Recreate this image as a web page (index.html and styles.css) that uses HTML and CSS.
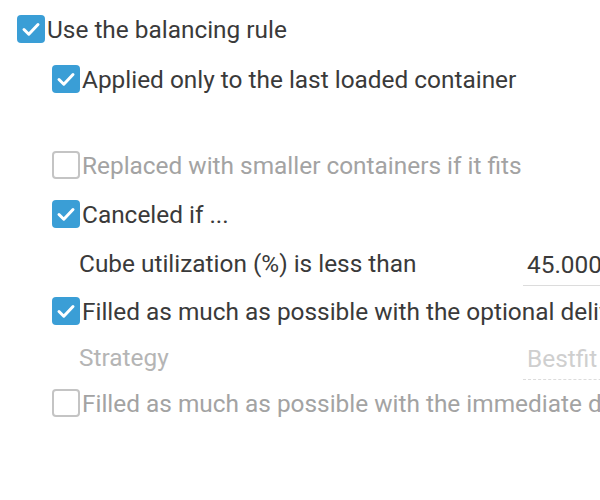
FILE: index.html
```html
<!DOCTYPE html>
<html lang="en">

<head>
    <meta charset="UTF-8">
    <meta name="viewport" content="width=device-width, initial-scale=1.0">
    <title>Balancing rule</title>
    <link rel="stylesheet" href="styles.css">
</head>

<body>

    <div class="panel">
        <label class="row level1 h50">
            <span class="box checked"><svg viewBox="0 0 28 28"><path d="M7 14.5 L11.8 19.2 L21 9.5"/></svg></span>
            <span class="text">Use the balancing rule</span>
        </label>

        <label class="row level2 h50">
            <span class="box checked"><svg viewBox="0 0 28 28"><path d="M7 14.5 L11.8 19.2 L21 9.5"/></svg></span>
            <span class="text">Applied only to the last loaded container</span>
        </label>

        <div class="spacer"></div>

        <label class="row level2 h50 disabled">
            <span class="box"></span>
            <span class="text">Replaced with smaller containers if it fits</span>
        </label>

        <label class="row level2 h48">
            <span class="box checked"><svg viewBox="0 0 28 28"><path d="M7 14.5 L11.8 19.2 L21 9.5"/></svg></span>
            <span class="text">Canceled if ...</span>
        </label>

        <div class="row field-row h50">
            <span class="field-label">Cube utilization (%) is less than</span>
            <span class="field">45.000</span>
        </div>

        <label class="row level2 h46">
            <span class="box checked"><svg viewBox="0 0 28 28"><path d="M7 14.5 L11.8 19.2 L21 9.5"/></svg></span>
            <span class="text">Filled as much as possible with the optional deliveries</span>
        </label>

        <div class="row field-row h46 disabled">
            <span class="field-label">Strategy</span>
            <span class="field dashed">Bestfit</span>
        </div>

        <label class="row level2 h46 disabled">
            <span class="box"></span>
            <span class="text">Filled as much as possible with the immediate deliveries</span>
        </label>
    </div>

</body>
</html>
```

FILE: styles.css
```css
body {
    margin: 0;
    font-family: Roboto, "Liberation Sans", sans-serif;
    background-color: #fff;
    color: #3a3a3a;
}

.panel {
    width: 600px;
    height: 500px;
    overflow: hidden;
    padding-top: 4px;
    box-sizing: border-box;
}

.row {
    display: flex;
    align-items: center;
    white-space: nowrap;
    font-size: 24.4px;
}

.h50 { height: 50px; }
.h48 { height: 48px; }
.h46 { height: 46px; }

.level1 { padding-left: 17px; }
.level2 { padding-left: 52px; }
.field-row { padding-left: 79px; }

.spacer { height: 36px; }

.box {
    flex: none;
    width: 28px;
    height: 28px;
    box-sizing: border-box;
    border-radius: 4px;
    border: 2px solid #c4c4c4;
    background-color: #fff;
    margin-right: 2px;
}

.box.checked {
    border: none;
    background-color: #3a9ed6;
}

.box svg {
    display: block;
    width: 28px;
    height: 28px;
}

.box svg path {
    fill: none;
    stroke: #fff;
    stroke-width: 3;
    stroke-linecap: round;
    stroke-linejoin: round;
}

.disabled .text {
    color: #a3a3a3;
}

.field-label {
    width: 444px;
    flex: none;
}

.disabled .field-label {
    color: #b5b5b5;
}

.field {
    flex: none;
    width: 120px;
    padding-left: 4px;
    padding-top: 1px;
    padding-bottom: 6px;
    margin-top: 8px;
    border-bottom: 1px solid #dcdcdc;
}

.field.dashed {
    color: #cfcfcf;
    border-bottom: 1px dashed #dcdcdc;
}
```
